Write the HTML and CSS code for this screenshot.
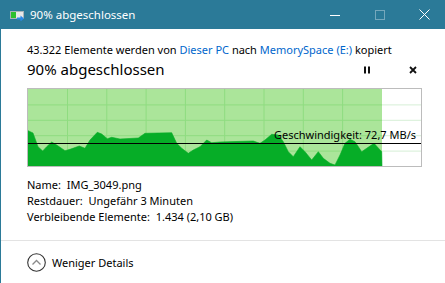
FILE: index.html
```html
<!DOCTYPE html>
<html lang="de">
<head>
<meta charset="utf-8">
<title>90% abgeschlossen</title>
<link rel="stylesheet" href="styles.css">
</head>
<body>
<div class="window">
  <div class="titlebar">
    <svg class="tb-icon" width="15" height="10" viewBox="0 0 15 10">
      <rect x="0.5" y="0.5" width="13" height="7" fill="#e8e8e8" stroke="#a9b4b8"/>
      <rect x="1" y="1" width="5" height="6" fill="#2fc02f"/>
      <path d="M7 7.5 H11.5" stroke="#2b8ae6" stroke-width="2"/>
      <path d="M10.5 4.5 L14 7.5 L10.5 10.5 Z" fill="#2b8ae6"/>
    </svg>
    <span class="tb-title">90% abgeschlossen</span>
    <div class="tb-controls">
      <div class="tb-btn">
        <svg width="10" height="10" viewBox="0 0 10 10"><path d="M0 5.5 H10" stroke="#fff" stroke-width="1"/></svg>
      </div>
      <div class="tb-btn">
        <svg width="10" height="10" viewBox="0 0 10 10"><rect x="0.5" y="0.5" width="9" height="9" fill="none" stroke="rgba(255,255,255,0.35)"/></svg>
      </div>
      <div class="tb-btn">
        <svg width="11" height="11" viewBox="0 0 11 11"><path d="M0.5 0.5 L10.5 10.5 M10.5 0.5 L0.5 10.5" stroke="#fff" stroke-width="1"/></svg>
      </div>
    </div>
  </div>
  <div class="content">
    <div class="main">
      <div class="line1">43.322 Elemente werden von <span class="link">Dieser PC</span> nach <span class="link">MemorySpace (E:)</span> kopiert</div>
      <div class="line2">
        <span class="status">90% abgeschlossen</span>
        <svg class="pause" width="7" height="8" viewBox="0 0 7 8"><rect x="0" y="0.5" width="2" height="7" fill="#111"/><rect x="4" y="0.5" width="2" height="7" fill="#111"/></svg>
        <svg class="cancel" width="8" height="8" viewBox="0 0 8 8"><path d="M1 1 L7 7 M7 1 L1 7" stroke="#111" stroke-width="1.8"/></svg>
      </div>
      <div class="chart">
        <svg class="chart-svg" width="393" height="77" viewBox="0 0 393 77">
          <rect x="0" y="0" width="354" height="77" fill="#abe59a"/>
          <g stroke="#d6efd6" stroke-width="1">
            <path d="M354 15.9 H393 M354 31.3 H393 M354 46.7 H393 M354 62.1 H393"/>
          </g>
          <g stroke="#8fdc80" stroke-width="1">
            <path d="M0 15.9 H354 M0 31.3 H354 M0 46.7 H354 M0 62.1 H354"/>
            <path d="M39.5 0 V77 M78.8 0 V77 M118.1 0 V77 M157.4 0 V77 M196.7 0 V77 M236 0 V77 M275.3 0 V77 M314.6 0 V77"/>
          </g>
          <polygon fill="#06ad27" stroke="#06ad27" stroke-width="0.6" stroke-linejoin="round" points="0,41.7 5,44 10,57.7 14.7,62 18.7,57.7 23.7,53 28.7,56 37,61.7 42,60.3 51.3,57 57,59.3 62,51 69.3,43.3 73.7,45 79.3,49.7 83.7,48.3 92,50 110.3,49 117,44.3 143.7,43.7 148.7,54.3 153.7,59.3 160.3,64.3 165.3,61 172,57.7 178.7,51 183.7,53.7 192,53 225.3,52 232,54.3 237,51 243.7,45.3 250.3,46 255.3,52.7 260.3,62.7 265.3,67.7 272,57.7 277,62.7 283.7,71 290.3,62.7 295.3,69.3 302,74.3 307,76 312,66 317,54.3 322,50.3 327,52.7 333.7,62.7 338.7,59.3 346,54.3 353.7,62.7 354,77 0,77"/>
          <path d="M0 54.5 H393" stroke="#000" stroke-width="1"/>
        </svg>
        <span class="speed">Geschwindigkeit: 72,7 MB/s</span>
      </div>
      <div class="info">
        <div>Name:&nbsp; IMG_3049.png</div>
        <div>Restdauer:&nbsp; Ungefähr 3 Minuten</div>
        <div>Verbleibende Elemente:&nbsp; 1.434 (2,10 GB)</div>
      </div>
    </div>
    <div class="footer">
      <svg class="toggle" width="19" height="19" viewBox="0 0 19 19">
        <circle cx="9.5" cy="9.5" r="8.8" fill="none" stroke="#333" stroke-width="1.1"/>
        <path d="M5.5 11.5 L9.5 7.5 L13.5 11.5" fill="none" stroke="#8a8a8a" stroke-width="1.3"/>
      </svg>
      <span class="toggle-label">Weniger Details</span>
    </div>
  </div>
</div>
</body>
</html>
```
FILE: styles.css
```css
html, body {
  margin: 0;
  padding: 0;
  background: #fff;
}
.window {
  width: 445px;
  height: 283px;
  overflow: hidden;
  display: flex;
  flex-direction: column;
  font-family: "Noto Sans", "Open Sans", sans-serif;
  font-size: 11px;
  color: #000;
  background: #fff;
}
.titlebar {
  height: 29px;
  flex: none;
  background: #2b7a98;
  display: flex;
  align-items: center;
  color: #fff;
}
.tb-icon {
  margin-left: 10px;
  margin-right: 5px;
  margin-top: 2px;
}
.tb-title {
  flex: 1;
  font-size: 11.5px;
  line-height: 16px;
}
.tb-controls {
  display: flex;
  margin-right: -2px;
  height: 29px;
}
.tb-btn {
  width: 45px;
  height: 29px;
  display: flex;
  align-items: center;
  justify-content: center;
}
.content {
  flex: 1;
  border-left: 1px solid #2b7a98;
  display: flex;
  flex-direction: column;
}
.main {
  padding: 12px 24px 0 26px;
}
.line1 {
  line-height: 17px;
  white-space: nowrap;
}
.link {
  color: #0066cc;
}
.line2 {
  margin-top: 1px;
  display: flex;
  align-items: center;
  height: 20px;
}
.status {
  flex: 1;
  font-size: 15px;
  line-height: 20px;
}
.pause {
  margin-right: 38px;
  margin-top: 1px;
}
.cancel {
  margin-right: 4px;
  margin-top: 1px;
}
.chart {
  position: relative;
  margin-top: 9px;
  width: 395px;
  height: 79px;
  box-sizing: border-box;
  border: 1px solid #bcbcbc;
}
.chart-svg {
  display: block;
}
.speed {
  position: absolute;
  right: 5px;
  top: 38px;
  line-height: 16px;
  white-space: nowrap;
}
.info {
  margin-top: 10px;
  line-height: 16px;
}
.footer {
  margin-top: 15px;
  border-top: 1px solid #e3e3e3;
  display: flex;
  align-items: center;
  padding: 12px 0 0 26px;
}
.toggle {
  margin-right: 6px;
}
.toggle-label {
  line-height: 18px;
}
```
